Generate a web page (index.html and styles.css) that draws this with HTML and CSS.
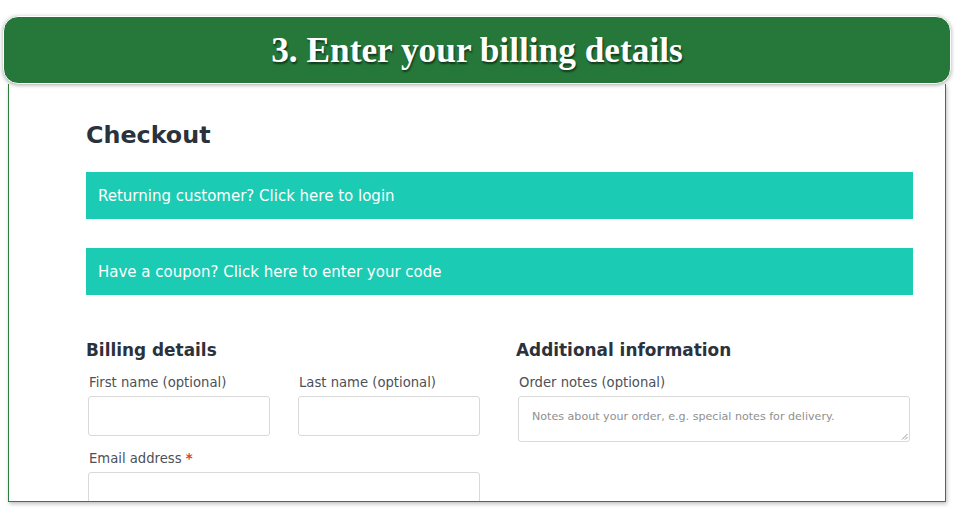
FILE: index.html
```html
<!DOCTYPE html>
<html lang="en">
<head>
<meta charset="utf-8">
<title>Enter your billing details</title>
<link rel="stylesheet" href="styles.css">
</head>
<body>
<div class="page">
  <header class="banner">
    <h1 class="banner-title">3. Enter your billing details</h1>
  </header>
  <main class="frame">
    <h2 class="checkout-title">Checkout</h2>
    <div class="notice">Returning customer? Click here to login</div>
    <div class="notice notice-second">Have a coupon? Click here to enter your code</div>
    <div class="columns">
      <section class="col">
        <h3 class="col-title">Billing details</h3>
        <div class="row">
          <div class="field">
            <label class="label">First name (optional)</label>
            <div class="input"></div>
          </div>
          <div class="field">
            <label class="label">Last name (optional)</label>
            <div class="input"></div>
          </div>
        </div>
        <div class="field field-full">
          <label class="label">Email address <span class="req">*</span></label>
          <div class="input"></div>
        </div>
      </section>
      <section class="col">
        <h3 class="col-title">Additional information</h3>
        <div class="field field-full">
          <label class="label">Order notes (optional)</label>
          <div class="textarea">
            <span class="placeholder">Notes about your order, e.g. special notes for delivery.</span>
            <svg class="grip" width="7" height="7" viewBox="0 0 7 7"><path d="M6.5 1 L1 6.5 M6.5 4 L4 6.5" stroke="#999" stroke-width="1" fill="none"/></svg>
          </div>
        </div>
      </section>
    </div>
  </main>
</div>
</body>
</html>
```
FILE: styles.css
```css
* { box-sizing: border-box; }
html, body { margin: 0; padding: 0; background: #fff; }
body { font-family: "DejaVu Sans", "Open Sans", sans-serif; overflow: hidden; }

.page {
  width: 955px;
  height: 523px;
  padding-top: 16px;
  display: flex;
  flex-direction: column;
}

.banner {
  position: relative;
  z-index: 2;
  margin: 0 4px 0 3px;
  height: 68px;
  padding-top: 2px;
  background: #25783a;
  border: 1px solid #fff;
  border-radius: 15px;
  box-shadow: 0 1px 4px rgba(0,0,0,0.35);
  display: flex;
  align-items: center;
  justify-content: center;
}

.banner-title {
  margin: 0;
  font-family: "Liberation Serif", "DejaVu Serif", serif;
  font-weight: 700;
  font-size: 35.3px;
  color: #fff;
  text-shadow: 1px 2px 2px rgba(0,0,0,0.55);
}

.frame {
  margin: 0 9px 0 8px;
  height: 418px;
  border: 1px solid #2e7d3c;
  border-top: none;
  box-shadow: 1px 2px 4px rgba(0,0,0,0.25);
  padding: 34px 32px 0 77px;
  overflow: hidden;
}

.checkout-title {
  margin: 0 0 20px;
  font-size: 23.8px;
  font-weight: 700;
  color: #2b323c;
  line-height: 34px;
}

.notice {
  height: 47px;
  background: #1bcbb3;
  color: #fff;
  font-size: 15px;
  display: flex;
  align-items: center;
  padding-left: 12px;
}

.notice-second { margin-top: 29px; }

.columns {
  margin-top: 42px;
  display: grid;
  grid-template-columns: 396px 396px;
  column-gap: 34px;
}

.col-title {
  margin: 0 0 10px;
  font-size: 16.9px;
  font-weight: 700;
  color: #2b323c;
  line-height: 26px;
}

.row {
  display: flex;
  gap: 28px;
  padding-left: 2px;
}

.row .field { width: 182px; }

.field-full { padding-left: 2px; margin-top: 13px; width: 394px; }
.col-title + .field-full { margin-top: 0; }

.label {
  display: block;
  font-size: 13.2px;
  color: #4c5157;
  line-height: 20px;
  margin-bottom: 3px;
  padding-left: 1px;
}

.req { color: #e2401c; font-weight: 700; }

.input {
  height: 40px;
  border: 1px solid #d9d9d9;
  border-radius: 3px;
  background: #fff;
}

.textarea {
  position: relative;
  height: 46px;
  border: 1px solid #d9d9d9;
  border-radius: 3px;
  padding: 8px 13px;
}

.placeholder {
  font-size: 11.1px;
  color: #8f8f8f;
}

.grip {
  position: absolute;
  right: 1px;
  bottom: 1px;
}
```
